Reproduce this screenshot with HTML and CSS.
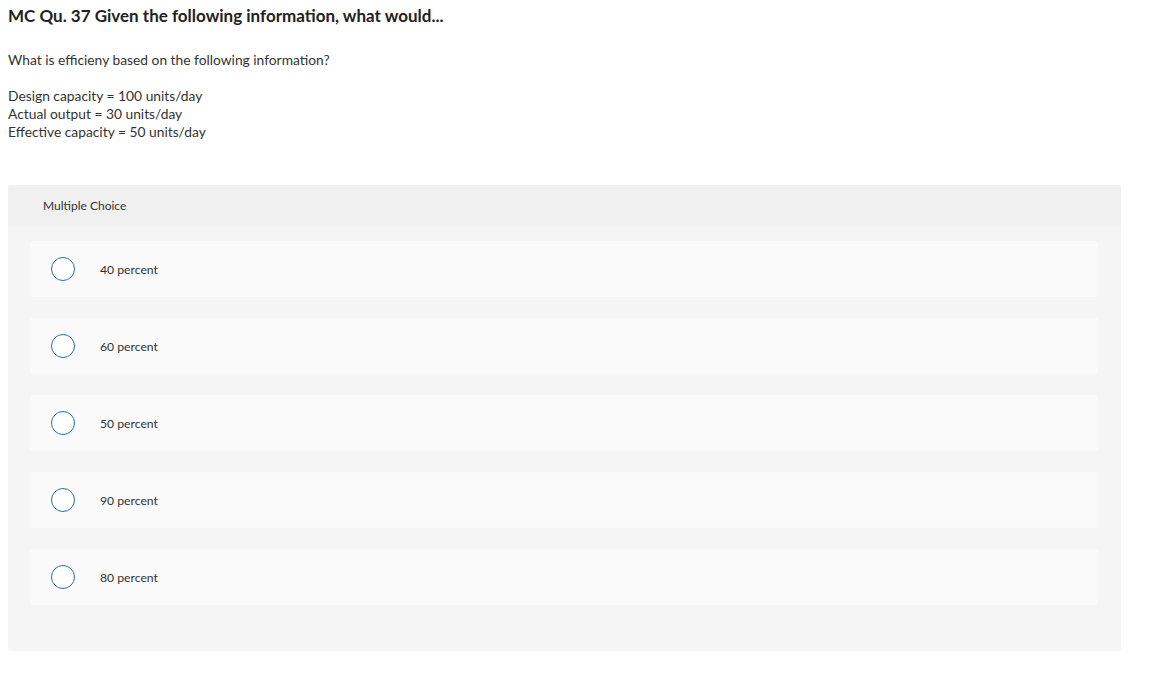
FILE: index.html
```html
<!DOCTYPE html>
<html>
<head>
<meta charset="utf-8">
<link rel="stylesheet" href="styles.css">
</head>
<body>
<div class="page">
  <h1 class="title">MC Qu. 37 Given the following information, what would...</h1>
  <p class="prompt">What is efficieny based on the following information?</p>
  <p class="data">Design capacity = 100 units/day<br>Actual output = 30 units/day<br>Effective capacity = 50 units/day</p>
  <div class="panel">
    <div class="panel-head">Multiple Choice</div>
    <div class="panel-body">
      <div class="option"><span class="radio"></span><span class="label">40 percent</span></div>
      <div class="option"><span class="radio"></span><span class="label">60 percent</span></div>
      <div class="option"><span class="radio"></span><span class="label">50 percent</span></div>
      <div class="option"><span class="radio"></span><span class="label">90 percent</span></div>
      <div class="option"><span class="radio"></span><span class="label">80 percent</span></div>
    </div>
  </div>
</div>
</body>
</html>
```
FILE: styles.css
```css
html, body { margin: 0; padding: 0; background: #fff; }
body { font-family: Lato, "Open Sans", sans-serif; color: #333; }
.page { padding: 5px 36px 0 8px; }
.title { margin: 0; font-size: 17px; font-weight: 700; color: #222; line-height: 22px; }
.prompt { margin: 24px 0 0; font-size: 13.8px; line-height: 18px; }
.data { margin: 18px 0 0; font-size: 13.8px; line-height: 18px; }
.panel { margin-top: 44px; width: 1113px; border-radius: 3px; background: #f5f5f5; overflow: hidden; }
.panel-head { height: 41px; background: #f0f0f0; padding-left: 35px; font-size: 12px; line-height: 42px; color: #333; }
.panel-body { padding: 15px 23px 46px 22px; display: flex; flex-direction: column; gap: 21px; }
.option { height: 56px; background: #fafafa; border-radius: 3px; display: flex; align-items: center; }
.radio { width: 22px; height: 22px; border: 1px solid #2d6aa8; border-radius: 50%; background: #fff; margin-left: 21px; flex: none; }
.label { margin-left: 25px; font-size: 12.2px; color: #333; }
```
